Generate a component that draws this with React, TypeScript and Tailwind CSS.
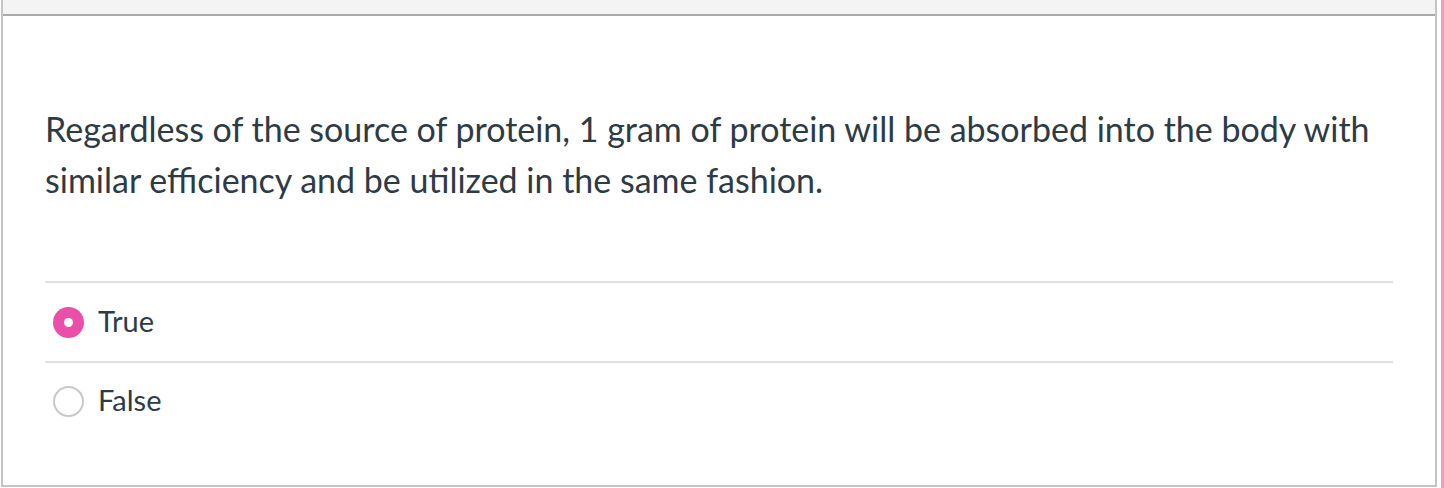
import React from "react";

export default function App() {
  return (
    <div className="w-[1444px] h-[488px] bg-white flex" style={{ fontFamily: "Lato, 'Noto Sans', sans-serif" }}>
      <div className="ml-px w-[1436px] h-[487px] border-l-2 border-r-2 border-b-2 border-[#c4c4c4] flex flex-col">
        <div className="h-[14px] bg-[#f4f4f4] border-b-2 border-[#aaaaaa] shrink-0 box-content" />
        <div className="pl-[42px] pr-[42px] pt-[87px]">
          <p className="text-[34px] leading-[51px] text-[#2d3b45]">
            Regardless of the source of protein, 1 gram of protein will be absorbed into the body with similar efficiency and be utilized in the same fashion.
          </p>
          <div className="mt-[76px] border-t-2 border-[#e0e0e0]">
            <div className="h-[78px] flex items-center gap-[14px] pl-[8px]">
              <div className="w-[31px] h-[31px] rounded-full bg-[#ec4fa9] flex items-center justify-center">
                <div className="w-[9px] h-[9px] rounded-full bg-white" />
              </div>
              <span className="text-[29px] leading-[34px] text-[#2d3b45] -mt-[2px]">True</span>
            </div>
            <div className="h-[80px] border-t-2 border-[#e0e0e0] flex items-center gap-[14px] pl-[8px] pb-[2px]">
              <div className="w-[31px] h-[31px] rounded-full bg-white border-2 border-[#c8c8c8]" />
              <span className="text-[29px] leading-[34px] text-[#2d3b45] -mt-[2px]">False</span>
            </div>
          </div>
        </div>
      </div>
      <div className="ml-[4px] w-[3px] h-[488px] bg-[#f598c9]" />
    </div>
  );
}
